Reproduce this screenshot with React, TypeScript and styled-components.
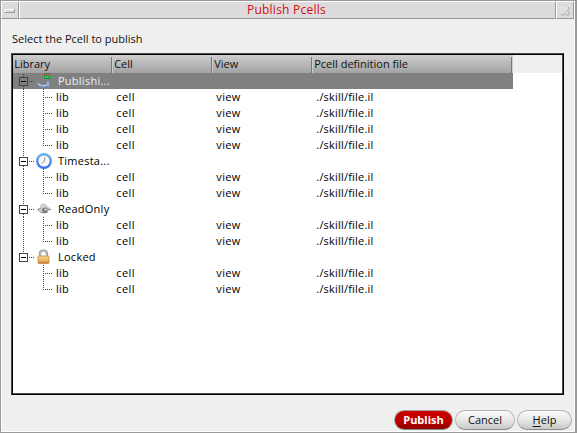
import React from "react";
import styled, { createGlobalStyle, css } from "styled-components";

const GlobalStyle = createGlobalStyle`
  *, *::after { box-sizing: border-box; }
  body { margin: 0; overflow: hidden; }
`;

const Window = styled.div`
  width: 577px;
  height: 433px;
  display: flex;
  flex-direction: column;
  background: #efefef;
  border: solid #999;
  border-width: 1px 2px 1px 1px;
  box-shadow: inset 1px 1px #fff, inset -1px -1px #fff;
  font-family: "Open Sans", "Noto Sans", sans-serif;
  font-size: 11px;
  line-height: 16px;
  color: #111;
  white-space: nowrap;
`;

const TitleBar = styled.header`
  display: flex;
  height: 18px;
  margin: 0 1px 0 0;
`;

const titleCell = css`
  border: 1px solid #999;
  border-top-color: #fff;
  border-left-color: #fff;
  background: #dcdcdc;
`;

const TitleButton = styled.button`
  ${titleCell}
  width: 18px;
  padding: 1px 0 0;
  display: flex;
  align-items: center;
  justify-content: center;
`;

const Title = styled.h1`
  ${titleCell}
  flex: 1;
  margin: 0;
  padding-right: 2px;
  font-size: 12px;
  font-weight: 400;
  line-height: 16px;
  text-align: center;
  color: #d60c12;
  letter-spacing: 0.25px;
`;

const Content = styled.main`
  flex: 1;
  padding: 12px 11px 0 10px;
`;

const Prompt = styled.p`
  margin: 0;
  padding-left: 1px;
  height: 22px;
  line-height: 16px;
`;

const Table = styled.section`
  width: 553px;
  height: 342px;
  border: 1px solid #4c4c4c;
  border-right-color: #000;
  border-bottom-color: #000;
  box-shadow: inset 1px 1px #000, inset -1px -1px #4c4c4c;
  background: #fff;
  padding: 1px;
`;

const HeaderRow = styled.div`
  display: grid;
  grid-template-columns: 100px 100px 100px 200px 1fr;
  height: 18px;
  background: #efefef;
`;

const HeaderCell = styled.div`
  position: relative;
  padding-left: 1.2px;
  line-height: 18px;
  background: linear-gradient(#cecece, #a2a2a2);
  &::after {
    content: "";
    position: absolute;
    right: 0;
    top: 2px;
    bottom: 0;
    width: 2px;
    border-left: 1px solid #777;
    border-right: 1px solid #ccc;
  }
`;

const Row = styled.div<{ $selected?: boolean }>`
  display: grid;
  grid-template-columns: 103.3px 100px 100px 196.7px;
  width: 500px;
  height: 16px;
  background: ${(p) => (p.$selected ? "#808080" : "transparent")};
  color: ${(p) => (p.$selected ? "#e9f3f3" : "#000")};
`;

const TreeCell = styled.div`
  display: flex;
`;

const Cell = styled.span<{ $spacing: number }>`
  letter-spacing: ${(p) => p.$spacing}px;
`;

const Tree = styled.svg<{ $width: number }>`
  width: ${(p) => p.$width}px;
  height: 16px;
  flex: none;
  overflow: visible;
  shape-rendering: crispEdges;
`;

const GroupIcon = styled.svg`
  width: 16px;
  height: 16px;
  flex: none;
  margin-right: 6px;
`;

const GroupName = styled.span`
  letter-spacing: 0.25px;
`;

const Footer = styled.footer`
  display: flex;
  justify-content: flex-end;
  gap: 2px;
  height: 22px;
  padding-right: 3px;
`;

const Button = styled.button<{ $width: number; $primary?: boolean }>`
  width: ${(p) => p.$width}px;
  height: 20px;
  padding: 0 0 1px;
  border: 1px solid ${(p) => (p.$primary ? "#a7a0a0" : "#b4b4b4")};
  border-bottom-color: #8c8c8c;
  border-radius: 10px;
  background: ${(p) =>
    p.$primary
      ? "linear-gradient(#cb0000, #bd0000 55%, #8d0000)"
      : "linear-gradient(#fafafa, #e8e8e8 50%, #c8c8c8)"};
  color: ${(p) => (p.$primary ? "#fff" : "#111")};
  font: ${(p) => (p.$primary ? 700 : 400)} 11px/17px "Open Sans", "Noto Sans", sans-serif;
`;

const Mnemonic = styled.span`
  text-decoration: underline;
  text-underline-offset: 2px;
`;

type Kind = "publish" | "clock" | "eye" | "lock";

const groups: { name: string; kind: Kind; count: number }[] = [
  { name: "Publishi...", kind: "publish", count: 4 },
  { name: "Timesta...", kind: "clock", count: 2 },
  { name: "ReadOnly", kind: "eye", count: 2 },
  { name: "Locked", kind: "lock", count: 2 },
];

const dots = { stroke: "#444", strokeWidth: 1, strokeDasharray: "1 1" };

function BranchLines({ first, last }: { first: boolean; last: boolean }) {
  return (
    <Tree $width={23} viewBox="0 0 23 16">
      <path d={`M10.5 ${first ? 1 : 0}V4${last ? "" : "M10.5 13V16"}M16 8.5H21`} fill="none" {...dots} />
      <rect x="6.5" y="4.5" width="8" height="8" fill={first ? "none" : "#fff"} stroke="#444" />
      <path d="M8 8.5H13" stroke="#000" />
    </Tree>
  );
}

function LeafLines({ end, trunk }: { end: boolean; trunk: boolean }) {
  return (
    <Tree $width={43} viewBox="0 0 43 16">
      {trunk && <path d="M10.5 0V16" {...dots} />}
      <path d={`M30.5 0V${end ? 9 : 16}M32 8.5H40`} fill="none" {...dots} />
    </Tree>
  );
}

function KindIcon({ kind }: { kind: Kind }) {
  return (
    <GroupIcon viewBox="0 0 16 16">
      {kind === "publish" && (
        <>
          <path d="M.5 9.5L3 9.5Q4 12 7 11.6L10.5 10.5V8H13.8V15H5Q2 14 .5 9.5Z" fill="#7186aa" />
          <path d="M2 10.5Q4 13.2 8 12.8L12 12V8.5" stroke="#adc3e4" strokeWidth="1.5" fill="none" />
          <path d="M8 2H14.5V6H8Z" fill="#159a35" />
          <path d="M9 0V1M11 0V1M13 0V1" stroke="#3f5148" />
          <path d="M9 4H10M11 4H12M13 4H14" stroke="#c6e4c7" />
          <path d="M6.5 1.5H15.5" stroke="#d6534a" />
        </>
      )}
      {kind === "clock" && (
        <>
          <defs>
            <linearGradient id="clock-rim" x2="0" y2="1">
              <stop stopColor="#68b4ee" />
              <stop offset="1" stopColor="#3f70f2" />
            </linearGradient>
          </defs>
          <circle cx="8" cy="8" r="6.8" fill="#fafafa" stroke="url(#clock-rim)" strokeWidth="2.4" />
          <path d="M9 4L8.3 8.6L5.5 10.5" stroke="#888" strokeWidth="0.9" fill="none" />
        </>
      )}
      {kind === "eye" && (
        <>
          <path d="M1 9Q4 5 9 5Q13 5 15 8.5Q11 12 7 12Q3 12 1 9Z" fill="#cbcbcb" />
          <path d="M1.5 9Q5 6 9 7Q12 9 15 8.5M4 11Q8 13 12 11" stroke="#909090" fill="none" />
          <circle cx="7.5" cy="5.8" r="3" fill="#d4d4d4" stroke="#b0b0b0" strokeWidth="0.6" />
          <circle cx="8.8" cy="9.2" r="2.6" fill="#777" />
          <circle cx="9.6" cy="8.5" r="1.1" fill="#eee" />
          <path d="M5 9.5L6.5 10.5" stroke="#ddd" />
        </>
      )}
      {kind === "lock" && (
        <>
          <defs>
            <linearGradient id="lock-body" x2="0" y2="1">
              <stop stopColor="#f8d892" />
              <stop offset="0.6" stopColor="#ebac54" />
              <stop offset="1" stopColor="#bd7930" />
            </linearGradient>
          </defs>
          <path d="M4 8V5Q4 1.5 7.5 1.5T11 5V8" fill="none" stroke="#8b8b8b" strokeWidth="2.2" />
          <path d="M4 7V5Q4 1.5 7.5 1.5T11 5V7" fill="none" stroke="#d0d0d0" strokeWidth="0.9" />
          <rect x="2" y="7" width="11" height="7.5" rx="0.8" fill="url(#lock-body)" stroke="#c48c46" strokeWidth="0.8" />
          <path d="M3 9.5H12M3 11.5H12" stroke="#f6ce88" strokeWidth="0.6" />
        </>
      )}
    </GroupIcon>
  );
}

export default function App() {
  return (
    <>
      <GlobalStyle />
      <Window>
        <TitleBar>
          <TitleButton aria-label="Window menu">
            <svg width="10" height="4" viewBox="0 0 10 4" shapeRendering="crispEdges">
              <path d="M0 3.5V.5H10" fill="none" stroke="#fff" />
              <path d="M0 3.5H9.5V0" fill="none" stroke="#999" />
            </svg>
          </TitleButton>
          <Title>Publish Pcells</Title>
          <TitleButton aria-label="Close">
            <svg width="10" height="10" viewBox="0 0 10 10">
              <path d="M.5 2.5L2.5 .5L5 2.5L7.5 .5L9.5 2.5L7.5 5L9.5 7.5L7.5 9.5L5 7.5L2.5 9.5L.5 7.5L2.5 5Z" fill="#dcdcdc" stroke="#999" strokeDasharray="2 .6" />
              <path d="M.5 7.5L2.5 5L.5 2.5L2.5 .5L5 2.5L7.5 .5" fill="none" stroke="#fff" />
            </svg>
          </TitleButton>
        </TitleBar>
        <Content>
          <Prompt>Select the Pcell to publish</Prompt>
          <Table>
            <HeaderRow>
              <HeaderCell>Library</HeaderCell>
              <HeaderCell>Cell</HeaderCell>
              <HeaderCell>View</HeaderCell>
              <HeaderCell>Pcell definition file</HeaderCell>
            </HeaderRow>
            {groups.map((group, g) => (
              <React.Fragment key={group.name}>
                <Row $selected={g === 0}>
                  <TreeCell>
                    <BranchLines first={g === 0} last={g === groups.length - 1} />
                    <KindIcon kind={group.kind} />
                    <GroupName>{group.name}</GroupName>
                  </TreeCell>
                </Row>
                {Array.from({ length: group.count }, (_, i) => (
                  <Row key={i}>
                    <TreeCell>
                      <LeafLines end={i === group.count - 1} trunk={g < groups.length - 1} />
                      <Cell $spacing={0.2}>lib</Cell>
                    </TreeCell>
                    <Cell $spacing={0.4}>cell</Cell>
                    <Cell $spacing={0.35}>view</Cell>
                    <Cell $spacing={0.2}>./skill/file.il</Cell>
                  </Row>
                ))}
              </React.Fragment>
            ))}
          </Table>
        </Content>
        <Footer>
          <Button $width={59} $primary>Publish</Button>
          <Button $width={60}>Cancel</Button>
          <Button $width={55}><Mnemonic>H</Mnemonic>elp</Button>
        </Footer>
      </Window>
    </>
  );
}
